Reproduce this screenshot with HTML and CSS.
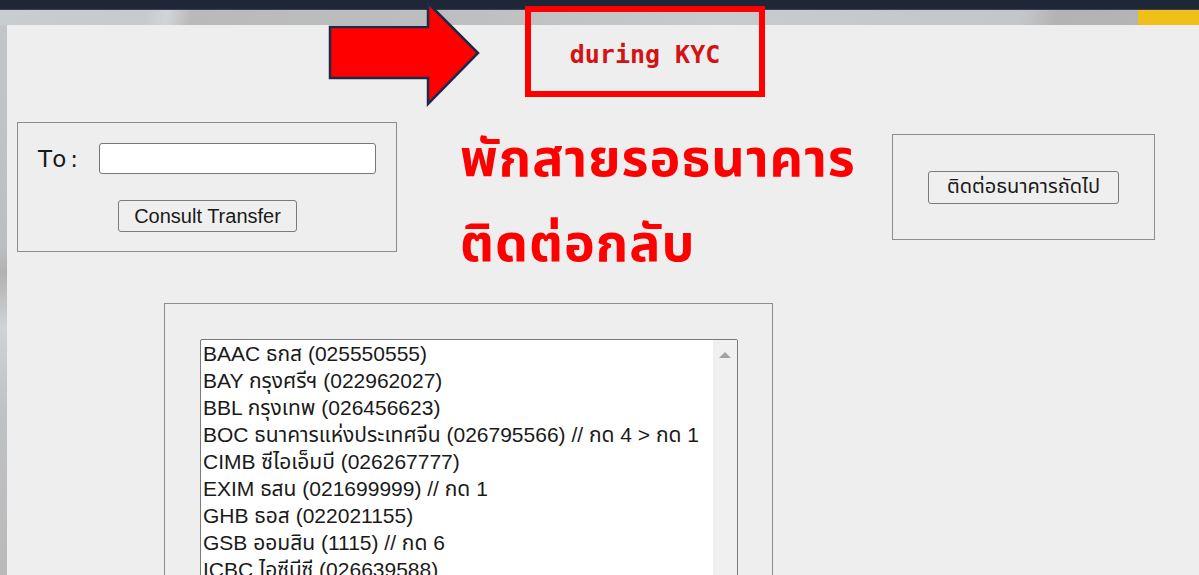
FILE: index.html
```html
<!DOCTYPE html>
<html lang="th">
<head>
<meta charset="utf-8">
<title>Consult Transfer</title>
<link rel="stylesheet" href="styles.css">
</head>
<body>
<div class="screen">
  <div class="topbar"></div>
  <div class="band"><div class="band-accent"></div></div>
  <div class="stage">
    <div class="edge"></div>
    <main class="panel">
      <div class="row">
        <section class="box box-to">
          <div class="to-line">
            <label class="to-label" for="to">To:</label>
            <input class="to-input" id="to" type="text">
          </div>
          <button class="btn btn-consult" type="button">Consult Transfer</button>
        </section>
        <div class="notice">
          <div>พักสายรอธนาคาร</div>
          <div>ติดต่อกลับ</div>
        </div>
        <section class="box box-next">
          <button class="btn btn-next" type="button">ติดต่อธนาคารถัดไป</button>
        </section>
      </div>
      <section class="box box-list">
        <div class="listbox">
          <ul class="options">
            <li>BAAC ธกส (025550555)</li>
            <li>BAY กรุงศรีฯ (022962027)</li>
            <li>BBL กรุงเทพ (026456623)</li>
            <li>BOC ธนาคารแห่งประเทศจีน (026795566) // กด 4 &gt; กด 1</li>
            <li>CIMB ซีไอเอ็มบี (026267777)</li>
            <li>EXIM ธสน (021699999) // กด 1</li>
            <li>GHB ธอส (022021155)</li>
            <li>GSB ออมสิน (1115) // กด 6</li>
            <li>ICBC ไอซีบีซี (026639588)</li>
          </ul>
          <div class="scrollbar"><span class="scroll-up"></span></div>
        </div>
      </section>
    </main>
  </div>

  <!-- callout drawn over the page -->
  <svg class="callout-arrow" width="160" height="110" viewBox="0 0 160 110">
    <polygon points="2,27 100,27 100,3 150,53 100,104 100,78 2,78" fill="#ff0000" stroke="#1b2a48" stroke-width="2.5" stroke-linejoin="miter"/>
  </svg>
  <div class="callout-box"><span>during KYC</span></div>
</div>
</body>
</html>
```

FILE: styles.css
```css
html, body {
  margin: 0;
  padding: 0;
}

body {
  width: 1199px;
  height: 575px;
  overflow: hidden;
  background: #c2c5c7;
  font-family: "Liberation Sans", Arial, "Noto Sans Thai", sans-serif;
}

.screen {
  position: relative;
  width: 1199px;
  height: 575px;
  display: flex;
  flex-direction: column;
  overflow: hidden;
}

.topbar {
  flex: 0 0 10px;
  background: #1e2638;
  border-bottom: 1px solid #3a4252;
  box-sizing: border-box;
}

.band {
  flex: 0 0 15px;
  display: flex;
  justify-content: flex-end;
  background: linear-gradient(100deg, #c9cdcf 0%, #c6cacc 12%, #d2d5d7 14%, #b9b9b9 16%, #bdbfc0 40%, #c8cbcd 60%, #c4c7c9 85%, #b3b3b3 88%, #b5b5b5 100%);
}

.band-accent {
  width: 61px;
  background: #efbf1a;
}

.stage {
  flex: 1 1 auto;
  min-height: 0;
  display: flex;
  overflow: hidden;
}

.edge {
  width: 7px;
  flex: 0 0 7px;
  background: linear-gradient(180deg, #c3c6c8 0%, #bcbfc1 40%, #b1b1b1 45%, #cfd3d5 55%, #bfc2c4 70%, #b9b9b9 100%);
}

.panel {
  flex: 1;
  background: #eeeeee;
  display: flex;
  flex-direction: column;
}

.row {
  display: flex;
  align-items: flex-start;
  flex: 0 0 181px;
  margin-top: 97px;
}

.box {
  box-sizing: border-box;
  border: 1px solid #8c8c8c;
}

.box-to {
  width: 380px;
  height: 130px;
  margin-left: 10px;
  padding: 20px 0 0 20px;
  display: flex;
  flex-direction: column;
}

.to-line {
  display: flex;
  align-items: center;
}

.to-label {
  width: 61px;
  font-family: "DejaVu Sans", sans-serif;
  font-size: 23px;
  letter-spacing: 4px;
  color: #1a1a1a;
}

.to-input {
  width: 277px;
  height: 31px;
  box-sizing: border-box;
  border: 1px solid #777;
  border-radius: 3px;
  background: #fff;
  margin: 0;
  padding: 0;
}

.btn {
  box-sizing: border-box;
  border: 1px solid #7a7a7a;
  border-radius: 3px;
  background: #efefef;
  color: #1a1a1a;
  font-family: "Liberation Sans", Arial, "Noto Sans Thai", sans-serif;
  font-size: 20px;
  padding: 0;
  margin: 0;
}

.btn-consult {
  align-self: flex-start;
  margin: 26px 0 0 80px;
  width: 179px;
  height: 32px;
}

.notice {
  margin: -4px 0 0 63px;
  font-family: "Noto Sans Thai", "Noto Sans", sans-serif;
  font-weight: bold;
  font-size: 52px;
  line-height: 85px;
  letter-spacing: 1px;
  color: #ff0000;
  white-space: nowrap;
}

.box-next {
  margin: 12px 44px 0 auto;
  width: 263px;
  height: 106px;
  display: flex;
  align-items: center;
  justify-content: center;
}

.btn-next {
  width: 191px;
  height: 33px;
}

.box-list {
  margin-left: 157px;
  width: 609px;
  flex: 0 0 330px;
  padding: 35px 0 0 35px;
}

.listbox {
  width: 538px;
  height: 300px;
  box-sizing: border-box;
  border: 1px solid #7a7a7a;
  border-radius: 2px 2px 0 0;
  background: #fff;
  display: flex;
}

.options {
  flex: 1;
  list-style: none;
  margin: 0;
  padding: 0 0 0 2px;
  overflow: hidden;
  font-size: 21px;
  line-height: 27px;
  color: #1a1a1a;
  white-space: nowrap;
}

.scrollbar {
  width: 24px;
  background: #f0f0f0;
  display: flex;
  justify-content: center;
}

.scroll-up {
  margin-top: 12px;
  width: 0;
  height: 0;
  border-left: 6px solid transparent;
  border-right: 6px solid transparent;
  border-bottom: 6px solid #a3a3a3;
}

.callout-arrow {
  position: absolute;
  left: 328px;
  top: 0;
}

.callout-box {
  position: absolute;
  left: 525px;
  top: 6px;
  width: 240px;
  height: 91px;
  box-sizing: border-box;
  border: 6px solid #ff0000;
  display: flex;
  align-items: center;
  justify-content: center;
}

.callout-box span {
  font-family: "DejaVu Sans Mono", "Liberation Mono", monospace;
  font-weight: bold;
  font-size: 25px;
  color: #d21414;
  margin: 6px 0 0 0;
}
```
